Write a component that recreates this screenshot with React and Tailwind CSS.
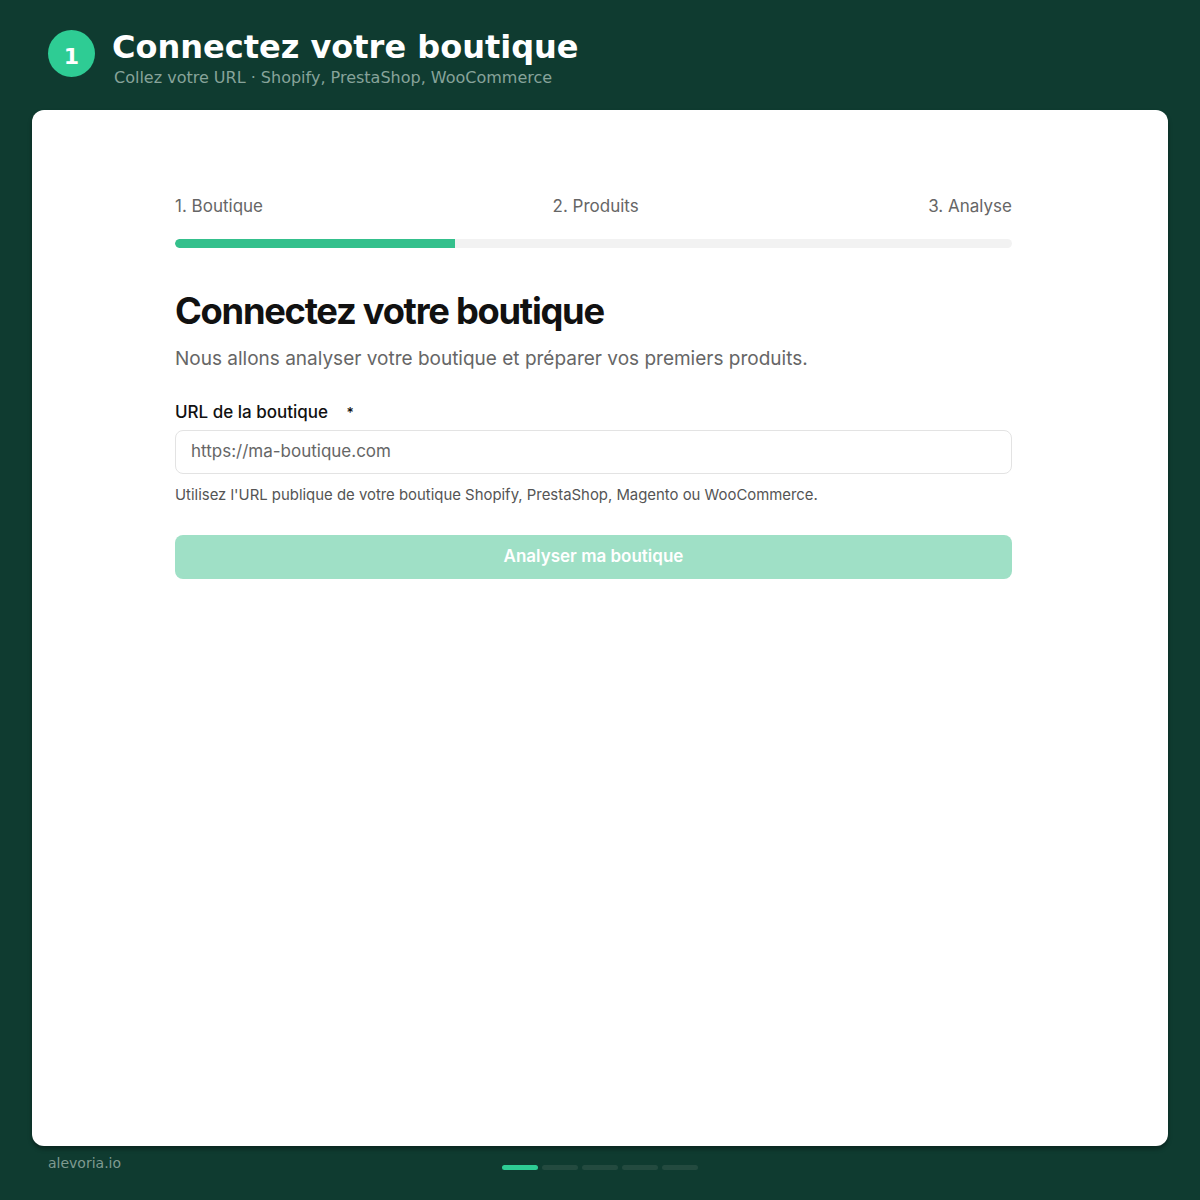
import React from 'react';

const steps = ['1. Boutique', '2. Produits', '3. Analyse'];

export default function App() {
  return (
    <div className="w-[1200px] h-[1200px] bg-[#0f3b30] flex flex-col px-8 pt-[30px] font-['DejaVu_Sans',sans-serif]">
      <div className="flex items-start pl-4">
        <div className="w-[47px] h-[47px] rounded-full bg-[#2ecc94] text-white flex items-center justify-center text-[22px] font-bold pt-[6px]">
          1
        </div>
        <div className="ml-[17px] -mt-[2px]">
          <h1 className="text-[32px] leading-[38px] font-bold text-white">Connectez votre boutique</h1>
          <p className="text-[16px] leading-[20px] text-[#87a39a] ml-[2px] mt-[2px]">
            Collez votre URL · Shopify, PrestaShop, WooCommerce
          </p>
        </div>
      </div>

      <div className="mt-[22px] h-[1036px] bg-white rounded-xl shadow-[0_3px_4px_rgba(0,0,0,0.35)] pt-[84px] px-[143px] font-['Inter',sans-serif]">
        <div className="w-[837px]">
          <div className="flex justify-between text-[17px] leading-[24px] text-[#666]">
            {steps.map((s) => (
              <span key={s}>{s}</span>
            ))}
          </div>
          <div className="mt-[21px] h-[9px] rounded-full bg-[#f2f2f2] overflow-hidden">
            <div className="h-full w-[280px] bg-[#34c08c] rounded-l-full" />
          </div>

          <h2 className="mt-[41px] text-[36.3px] leading-[44px] font-bold tracking-[-0.035em] text-[#111]">
            Connectez votre boutique
          </h2>
          <p className="mt-[12px] text-[19px] leading-[28px] text-[#666]">
            Nous allons analyser votre boutique et préparer vos premiers produits.
          </p>

          <label className="mt-[27px] block text-[17px] leading-[24px] font-medium text-[#111]">
            URL de la boutique <span className="ml-[14px] text-[14px]">*</span>
          </label>
          <div className="mt-[5px] h-[44px] rounded-lg border border-[#e3e3e3] flex items-center px-[15px] text-[17px] text-[#666]">
            https://ma-boutique.com
          </div>
          <p className="mt-[11px] text-[14.9px] leading-[20px] text-[#555]">
            Utilisez l'URL publique de votre boutique Shopify, PrestaShop, Magento ou WooCommerce.
          </p>

          <button className="mt-[30px] w-full h-[44px] rounded-lg bg-[#9fe0c6] text-white text-[17px] font-semibold">
            Analyser ma boutique
          </button>
        </div>
      </div>

      <div className="relative mt-[5px] px-4 h-[20px]">
        <span className="text-[14px] leading-[16px] text-[#7f9a90]">alevoria.io</span>
        <div className="absolute left-[470px] top-[14px] flex gap-[4px]">
          <div className="w-[36px] h-[5px] rounded-full bg-[#2ecc94]" />
          <div className="w-[36px] h-[5px] rounded-full bg-[#234a3f]" />
          <div className="w-[36px] h-[5px] rounded-full bg-[#234a3f]" />
          <div className="w-[36px] h-[5px] rounded-full bg-[#234a3f]" />
          <div className="w-[36px] h-[5px] rounded-full bg-[#234a3f]" />
        </div>
      </div>
    </div>
  );
}
